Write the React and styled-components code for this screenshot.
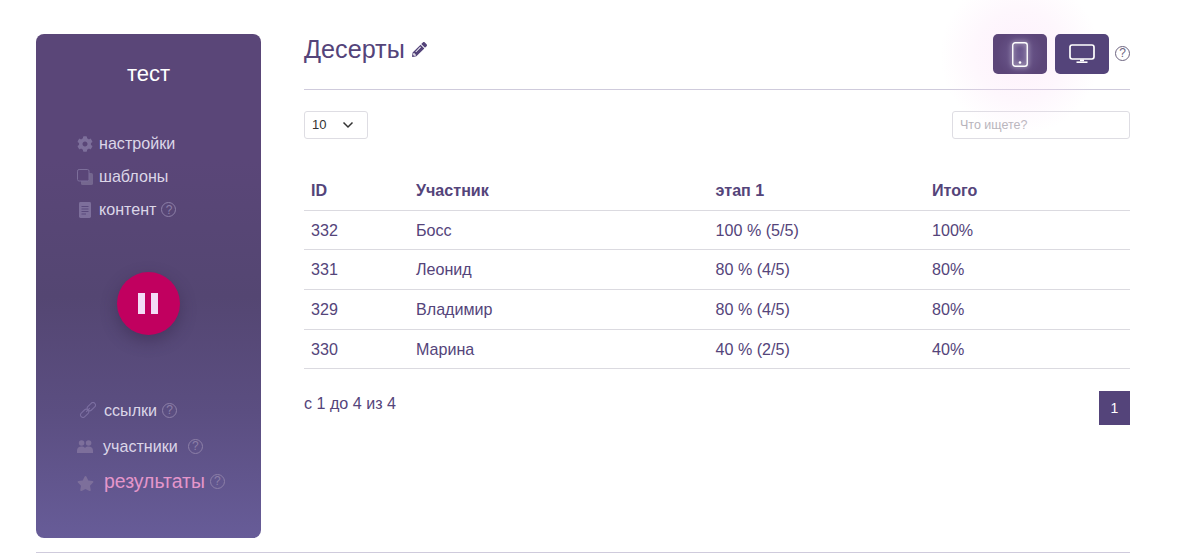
import React from "react";
import styled, { createGlobalStyle } from "styled-components";
import { FaCog, FaStar, FaPencilAlt } from "react-icons/fa";

const Global = createGlobalStyle`
  html, body { margin: 0; padding: 0; background: #fff; }
  body { font-family: "Liberation Sans", Arial, sans-serif; color: #54447a; }
  * { box-sizing: border-box; }
`;
const Page = styled.div`
  width: 1181px; height: 554px; overflow: hidden; padding: 34px 51px 0 36px; position: relative;
`;
const Columns = styled.div`display: flex; height: 504px; gap: 43px;`;
const Footer = styled.div`height: 1px; width: 1094px; margin-top: 14px; background: #cfcbdc;`;
const Sidebar = styled.aside`
  width: 225px; flex: none; border-radius: 8px; display: flex; flex-direction: column;
  background: linear-gradient(180deg, #5a4678 0%, #5a4678 25%, #544672 52%, #5b4e81 75%, #675c98 100%);
  color: #fff;
`;
const Title = styled.div`
  font-size: 22px; line-height: 26px; text-align: center; margin-top: 27px; color: #fff;
`;
const TopNav = styled.nav`
  display: flex; flex-direction: column; margin-top: 40px; padding-left: 41px;
`;
const NavRow = styled.div`
  display: flex; align-items: center; height: 33px; font-size: 16.1px; color: #dcd6e8;
`;
const NavIcon = styled.span`
  width: ${p => p.$w || 22}px; flex: none; display: flex; align-items: center; color: #7d6f9b; font-size: ${p => p.$size || 16}px;
  padding-left: ${p => p.$pl || 0}px; padding-top: ${p => p.$pt || 0}px;
`;
const Help = styled.span`
  display: inline-flex; align-items: center; justify-content: center; flex: none;
  width: 15px; height: 15px; border-radius: 50%; border: 1px solid #8d80a8; color: #8d80a8;
  font-size: 12px; line-height: 1; margin-left: ${p => p.$ml ?? 5}px;
`;
const PauseWrap = styled.div`display: flex; justify-content: center; margin-top: 46px;`;
const PauseBtn = styled.button`
  width: 63px; height: 63px; border-radius: 50%; border: 0; background: #c1005f; padding: 0 1px 0 0;
  display: flex; align-items: center; justify-content: center; gap: 6px;
  box-shadow: 0 6px 16px rgba(50, 35, 70, .45);
`;
const PauseBar = styled.span`display: block; width: 7px; height: 21px; background: #f3dcf6;`;
const BottomNav = styled.nav`
  display: flex; flex-direction: column; margin-top: 57px; padding-left: 41px;
`;
const BottomRow = styled.div`
  display: flex; align-items: center; height: ${p => p.$h}px; font-size: ${p => p.$fs || 16.1}px;
  color: ${p => p.$c || "#dcd6e8"};
`;
const Main = styled.main`flex: 1; min-width: 0; display: flex; flex-direction: column;`;
const Head = styled.header`
  height: 56px; display: flex; align-items: flex-start; border-bottom: 1px solid #cfcbdc; position: relative;
`;
const H1 = styled.h1`
  margin: 0; font-weight: 400; font-size: 25.2px; line-height: 30px; color: #54447a; display: flex; align-items: center;
`;
const Pencil = styled.span`display: flex; margin-left: 7px; font-size: 15px; color: #54447a;`;
const Devices = styled.div`margin-left: auto; display: flex; align-items: center; height: 40px; gap: 8px;`;
const Glow = styled.div`
  position: absolute; left: 636px; top: -59px; width: 160px; height: 160px; border-radius: 50%;
  background: radial-gradient(circle closest-side, rgba(250,210,245,.32) 0%, rgba(250,218,245,.22) 55%, rgba(255,235,250,0) 100%);
  pointer-events: none;
`;
const DeviceBtn = styled.button`
  position: relative; width: 54px; height: 40px; border: 0; border-radius: 5px; padding: 0;
  display: flex; align-items: center; justify-content: center;
  background: ${p => p.$active ? "radial-gradient(circle, #6f5c92 0%, #5c4679 70%)" : "#54447a"};
`;
const HeadHelp = styled(Help)`margin-left: -2px; margin-bottom: 2px; color: #6d6480; border-color: #6d6480;`;
const Controls = styled.div`
  display: flex; justify-content: space-between; margin-top: 21px; height: 28px;
`;
const SelectBox = styled.div`
  width: 64px; height: 28px; border: 1px solid #dedde3; border-radius: 3px; display: flex; align-items: center;
  padding: 0 0 1px 7px; font-size: 13px; color: #333; background: #fff;
`;
const Chevron = styled.svg`margin-left: 16px; margin-top: 1px;`;
const SearchBox = styled.input`
  width: 178px; height: 28px; border: 1px solid #dedde3; border-radius: 3px; padding: 0 7px;
  font: 12.5px "Liberation Sans", Arial, sans-serif; color: #333; outline: none;
  &::placeholder { color: #b7b4bb; opacity: 1; }
`;
const Table = styled.table`
  width: 100%; border-collapse: collapse; margin-top: 32px; table-layout: fixed; font-size: 16.1px;
`;
const Th = styled.th`
  text-align: left; font-weight: 700; padding: 0 7px; height: 39px; border-bottom: 1px solid #dbdae0; color: #54447a; width: ${p => p.$w}px;
`;
const Td = styled.td`
  padding: ${p => (p.$h === 39 ? "1px" : "0")} 7px 0; height: ${p => p.$h}px; border-bottom: 1px solid #dbdae0; color: #54447a;
`;
const Bottom = styled.div`display: flex; justify-content: space-between; align-items: flex-start; margin-top: 22px;`;
const Info = styled.div`font-size: 16.1px; line-height: 24px; color: #54447a;`;
const PageBtn = styled.div`
  width: 31px; height: 34px; background: #54447a; color: #fff; font-size: 14px; display: flex; align-items: center; justify-content: center;
`;

const Phone = () => (
  <svg width="16" height="25" viewBox="0 0 16 25" fill="none" style={{ filter: "drop-shadow(0 0 2.5px rgba(255,255,255,.9))" }}>
    <rect x=".75" y=".75" width="14.5" height="23.5" rx="2.5" stroke="#fff" strokeWidth="1.4" />
    <circle cx="8" cy="20.5" r="1.3" fill="#fff" />
  </svg>
);
const Desktop = () => (
  <svg width="26" height="20" viewBox="0 0 26 20" fill="none">
    <rect x="1" y="1" width="24" height="14" rx="2.2" stroke="#fff" strokeWidth="1.7" />
    <path d="M11 15.5h4v1.8h-4z" fill="#fff" />
    <path d="M7.5 17.4h11V19h-11z" fill="#fff" />
  </svg>
);
const CloneIcon = () => (
  <svg width="16" height="16" viewBox="0 0 16 16">
    <rect x="4" y="4" width="12" height="12" rx="1.6" fill="#75678f" />
    <rect x=".5" y=".5" width="11.5" height="11.5" rx="1.6" fill="#5a4678" stroke="#7d6f9b" strokeWidth="1" />
  </svg>
);
const DocIcon = () => (
  <svg width="12" height="16" viewBox="0 0 12 16">
    <rect width="12" height="16" rx="1.4" fill="#7d6f9b" />
    <path d="M2.5 4.5h7M2.5 7h7M2.5 9.5h7M2.5 12h4.5" stroke="#5a4a7c" strokeWidth="1" />
  </svg>
);
const ChainIcon = () => (
  <svg width="16" height="16" viewBox="0 0 16 16" fill="none" stroke="#7b6ea0" strokeWidth="1.1">
    <g transform="rotate(-45 8 8)">
      <rect x="-1.5" y="5.5" width="9.5" height="5" rx="2.5" />
      <rect x="8" y="5.5" width="9.5" height="5" rx="2.5" />
      <path d="M5.5 8h5" />
    </g>
  </svg>
);
const PeopleIcon = () => (
  <svg width="16" height="13" viewBox="0 0 16 13" fill="#7d6f9b">
    <circle cx="4.6" cy="3" r="2.8" />
    <circle cx="11.6" cy="3" r="2.8" />
    <path d="M0 13v-2.6C0 8 2 6.6 4.4 6.6c1.5 0 2.8.5 3.6 1.4.8-.9 2.1-1.4 3.6-1.4C14 6.6 16 8 16 10.4V13z" />
  </svg>
);

const rows = [
  ["332", "Босс", "100 % (5/5)", "100%", 39],
  ["331", "Леонид", "80 % (4/5)", "80%", 40],
  ["329", "Владимир", "80 % (4/5)", "80%", 40],
  ["330", "Марина", "40 % (2/5)", "40%", 39],
];

export default function App() {
  return (
    <Page>
      <Global />
      <Columns>
        <Sidebar>
          <Title>тест</Title>
          <TopNav>
            <NavRow><NavIcon><FaCog /></NavIcon>настройки</NavRow>
            <NavRow><NavIcon><CloneIcon /></NavIcon>шаблоны</NavRow>
            <NavRow><NavIcon $pl={2}><DocIcon /></NavIcon>контент<Help>?</Help></NavRow>
          </TopNav>
          <PauseWrap><PauseBtn aria-label="pause"><PauseBar /><PauseBar /></PauseBtn></PauseWrap>
          <BottomNav>
            <BottomRow $h={36}><NavIcon $w={27} $pl={3}><ChainIcon /></NavIcon>ссылки<Help>?</Help></BottomRow>
            <BottomRow $h={36}><NavIcon $w={26}><PeopleIcon /></NavIcon>участники<Help $ml={10}>?</Help></BottomRow>
            <BottomRow $h={34} $fs={19.4} $c="#e596cb"><NavIcon $w={27} $size={17} $pt={4}><FaStar /></NavIcon>результаты<Help>?</Help></BottomRow>
          </BottomNav>
        </Sidebar>
        <Main>
          <Head>
            <H1>Десерты<Pencil><FaPencilAlt /></Pencil></H1>
            <Glow />
            <Devices>
              <DeviceBtn $active><Phone /></DeviceBtn>
              <DeviceBtn><Desktop /></DeviceBtn>
              <HeadHelp>?</HeadHelp>
            </Devices>
          </Head>
          <Controls>
            <SelectBox>10<Chevron width="12" height="8" viewBox="0 0 12 8" fill="none"><path d="M1.5 1.5 6 6l4.5-4.5" stroke="#333" strokeWidth="1.5" /></Chevron></SelectBox>
            <SearchBox placeholder="Что ищете?" />
          </Controls>
          <Table>
            <thead>
              <tr><Th $w={105}>ID</Th><Th $w={299.6}>Участник</Th><Th $w={216.4}>этап 1</Th><Th>Итого</Th></tr>
            </thead>
            <tbody>
              {rows.map(r => (
                <tr key={r[0]}><Td $h={r[4]}>{r[0]}</Td><Td $h={r[4]}>{r[1]}</Td><Td $h={r[4]}>{r[2]}</Td><Td $h={r[4]}>{r[3]}</Td></tr>
              ))}
            </tbody>
          </Table>
          <Bottom>
            <Info>с 1 до 4 из 4</Info>
            <PageBtn>1</PageBtn>
          </Bottom>
        </Main>
      </Columns>
      <Footer />
    </Page>
  );
}
